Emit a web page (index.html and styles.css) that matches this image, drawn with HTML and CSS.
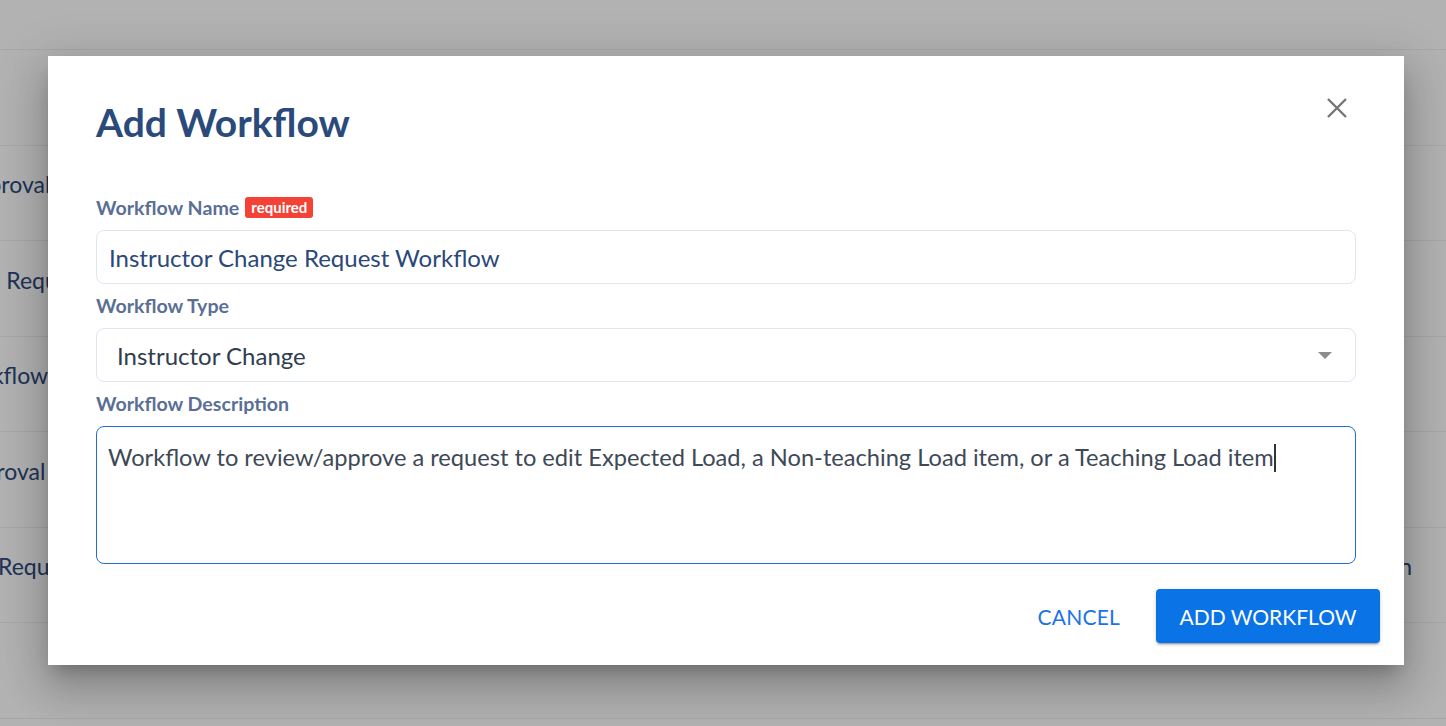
FILE: index.html
```html
<!DOCTYPE html>
<html lang="en">
<head>
<meta charset="utf-8">
<title>Add Workflow</title>
<link rel="stylesheet" href="styles.css">
</head>
<body>
<div class="page">
  <div class="page-header"></div>
  <div class="row"><span class="cell-left"></span><span class="cell-right"></span></div>
  <div class="row"><span class="cell-left c1">Approval</span><span class="cell-right"></span></div>
  <div class="row"><span class="cell-left c2">Change Request</span><span class="cell-right"></span></div>
  <div class="row"><span class="cell-left c3">Workflow</span><span class="cell-right"></span></div>
  <div class="row"><span class="cell-left c4">Approval</span><span class="cell-right"></span></div>
  <div class="row"><span class="cell-left c5">Request</span><span class="cell-right">Admin</span></div>
  <div class="row"></div>
</div>
<div class="overlay"></div>
<div class="dialog">
  <div class="dialog-head">
    <h1 class="title">Add Workflow</h1>
    <button class="close" aria-label="Close">
      <svg width="22" height="22" viewBox="0 0 22 22"><path d="M2 2 L20 20 M20 2 L2 20" stroke="#767676" stroke-width="2.4" fill="none"/></svg>
    </button>
  </div>
  <div class="field">
    <div class="label">Workflow Name <span class="badge">required</span></div>
    <div class="input name">Instructor Change Request Workflow</div>
  </div>
  <div class="field">
    <div class="label">Workflow Type</div>
    <div class="input select"><span>Instructor Change</span>
      <svg class="arrow" width="14" height="7" viewBox="0 0 14 7"><path d="M0 0 L14 0 L7 7 Z" fill="#8c8c8c"/></svg>
    </div>
  </div>
  <div class="field">
    <div class="label">Workflow Description</div>
    <div class="textarea">Workflow to review/approve a request to edit Expected Load, a Non-teaching Load item, or a Teaching Load item<span class="caret"></span></div>
  </div>
  <div class="actions">
    <button class="btn-text">CANCEL</button>
    <button class="btn-primary">ADD WORKFLOW</button>
  </div>
</div>
</body>
</html>
```

FILE: styles.css
```css
* { box-sizing: border-box; }
html, body { margin: 0; padding: 0; }
body {
  width: 1446px;
  height: 726px;
  overflow: hidden;
  background: #ffffff;
  font-family: Lato, "Noto Sans", sans-serif;
  position: relative;
}
.page { width: 1446px; }
.page-header { height: 50px; border-bottom: 1px solid #f0f0f0; }
.row {
  height: 95.5px;
  border-bottom: 1px solid #f0f0f0;
  display: flex;
  align-items: center;
  justify-content: space-between;
  padding-bottom: 17px;
  font-size: 23px;
  color: #2c4a7c;
  overflow: hidden;
}
.cell-left { white-space: nowrap; }
.c1 { margin-left: -40px; }
.c2 { margin-left: -76px; }
.c3 { margin-left: -52px; }
.c4 { margin-left: -45px; }
.c5 { margin-left: -2px; }
.cell-right { margin-right: 34px; white-space: nowrap; }
.overlay {
  position: absolute;
  inset: 0;
  background: rgba(0, 0, 0, 0.3);
}
.dialog {
  position: absolute;
  left: 48px;
  top: 56px;
  width: 1356px;
  height: 609px;
  background: #fff;
  padding: 43px 48px 0 48px;
  box-shadow: 0 11px 15px -7px rgba(0,0,0,.22), 0 24px 38px 3px rgba(0,0,0,.16), 0 9px 46px 8px rgba(0,0,0,.12);
  display: flex;
  flex-direction: column;
}
.dialog-head {
  display: flex;
  justify-content: space-between;
  align-items: flex-start;
}
.title {
  margin: 0;
  font-size: 39px;
  line-height: 46px;
  font-weight: 700;
  color: #2b4a7c;
}
.close {
  border: 0;
  background: none;
  padding: 0;
  margin: -2px 8px 0 0;
  width: 22px;
  height: 22px;
  display: block;
}
.close svg { display: block; }
.field { display: flex; flex-direction: column; }
.dialog-head + .field { margin-top: 52px; }
.label {
  font-size: 19.6px;
  line-height: 22px;
  font-weight: 700;
  color: #5a6f96;
  display: flex;
  align-items: center;
  gap: 6px;
  margin-bottom: 11px;
}
.badge {
  background: #f44336;
  color: #fff;
  font-size: 15px;
  line-height: 21px;
  height: 21px;
  padding: 0 6px;
  border-radius: 3px;
  font-weight: 700;
  margin-top: -2px;
}
.input {
  height: 54px;
  border: 1px solid #dfe6ef;
  border-radius: 8px;
  display: flex;
  align-items: center;
  font-size: 24px;
  margin-bottom: 11px;
}
.name { padding-left: 12px; color: #2b4878; }
.select {
  padding-left: 20px;
  padding-right: 23px;
  color: #2f3d4f;
  justify-content: space-between;
}
.arrow { display: block; }
.textarea {
  height: 138px;
  border: 1px solid #1f6fd6;
  border-radius: 8px;
  padding: 14px 11px;
  font-size: 23.65px;
  line-height: 32px;
  color: #3e4957;
}
.caret {
  display: inline-block;
  width: 2px;
  height: 28px;
  background: #333;
  vertical-align: -6px;
  margin-left: 0;
}
.actions {
  display: flex;
  justify-content: flex-end;
  align-items: center;
  margin-top: 25px;
  margin-right: -24px;
  gap: 24px;
}
.btn-text {
  border: 0;
  background: none;
  font-family: Lato, sans-serif;
  font-size: 21px;
  color: #1a73e8;
  padding: 0 12px;
  height: 54px;
  letter-spacing: 0.2px;
}
.btn-primary {
  border: 0;
  background: #0a73e6;
  color: #fff;
  font-family: Lato, sans-serif;
  font-size: 21px;
  height: 54px;
  width: 224px;
  padding: 0;
  border-radius: 4px;
  box-shadow: 0 3px 1px -2px rgba(0,0,0,.2), 0 2px 2px 0 rgba(0,0,0,.14), 0 1px 5px 0 rgba(0,0,0,.12);
}
```
